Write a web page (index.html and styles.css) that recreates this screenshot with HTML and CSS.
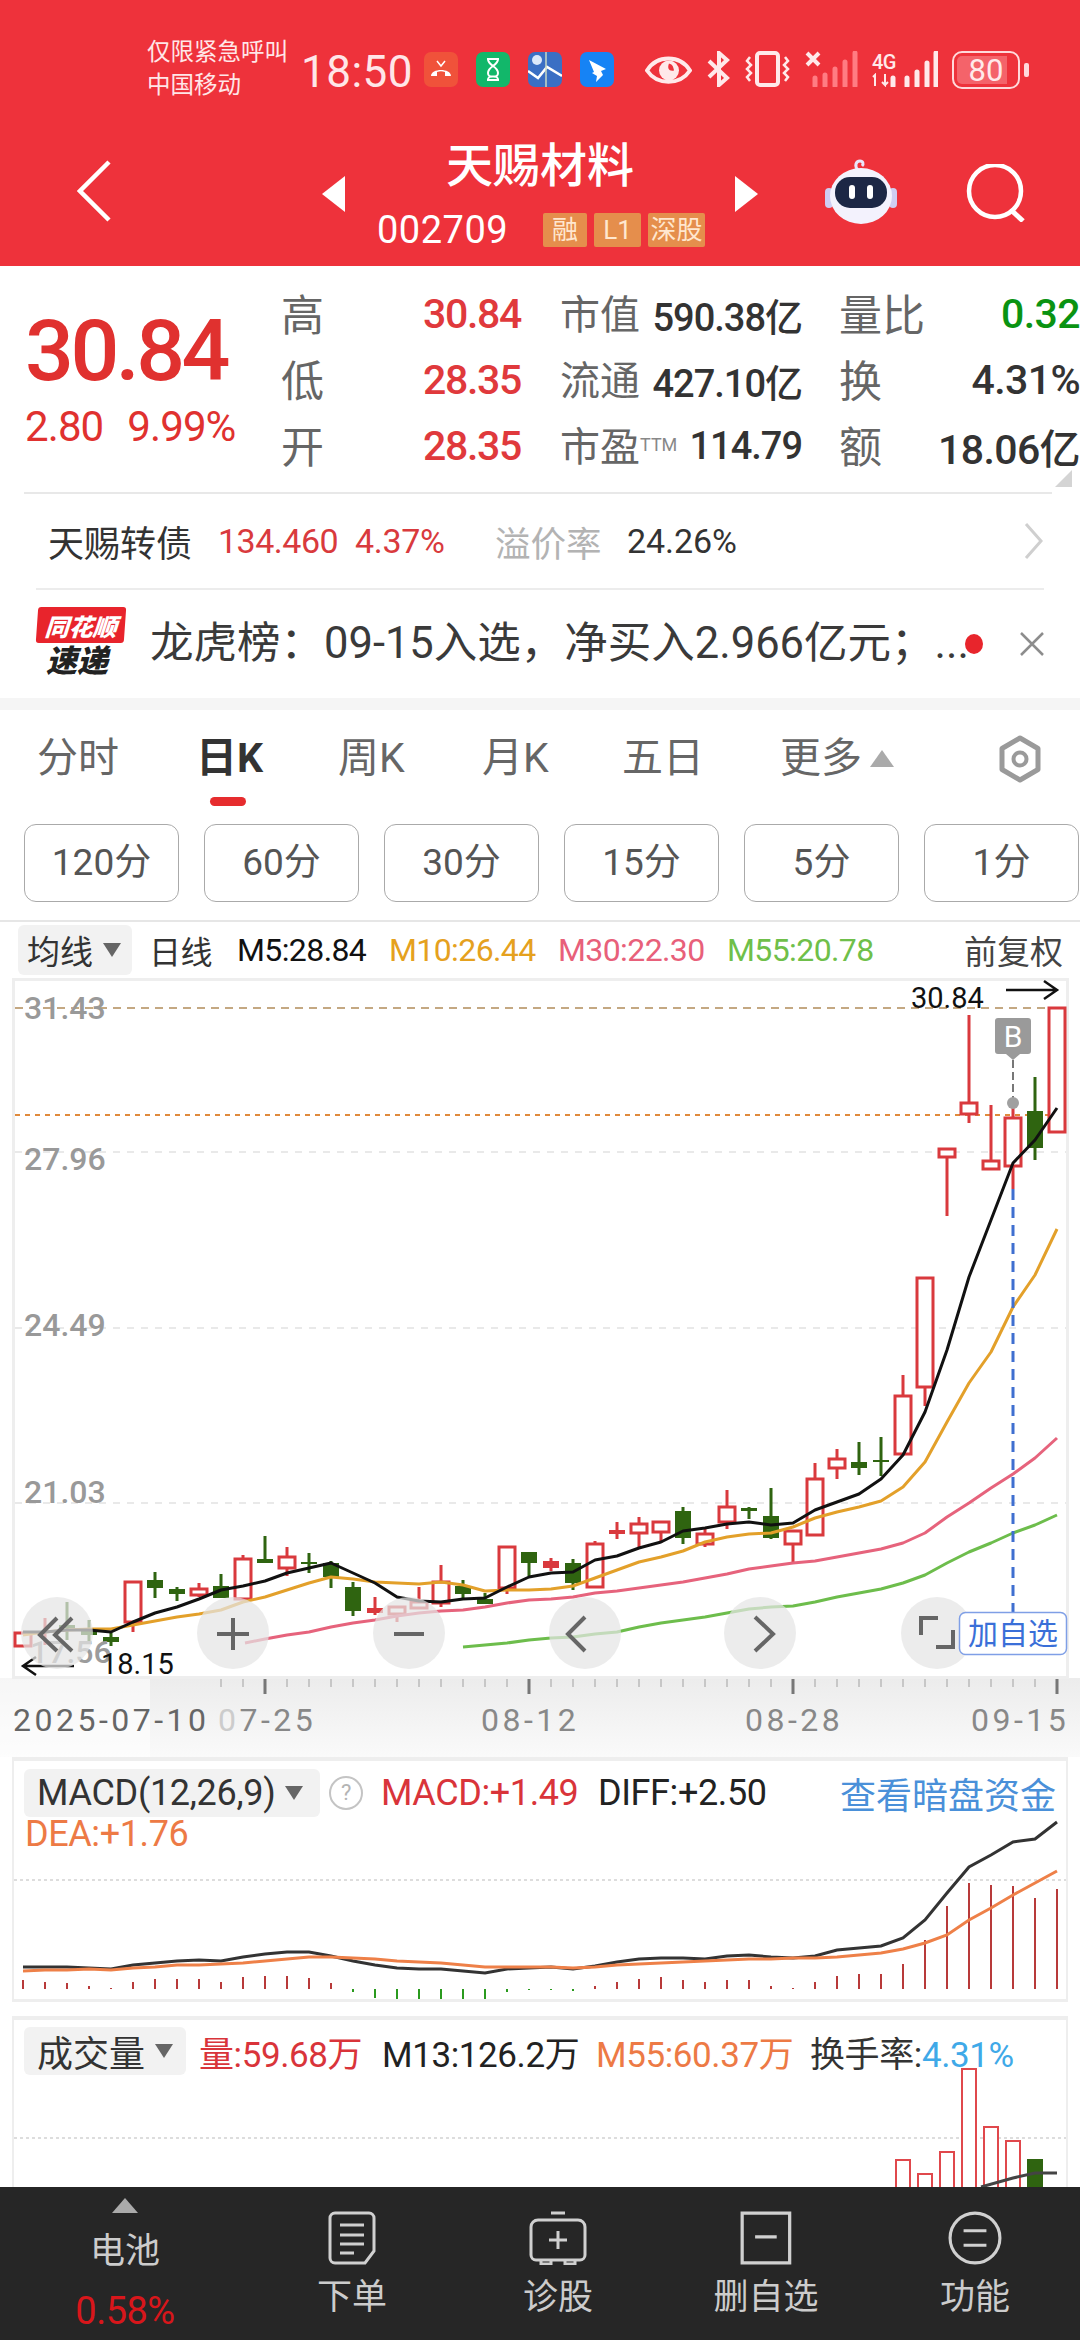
FILE: index.html
```html
<!DOCTYPE html>
<html lang="zh-CN">
<head>
  <meta charset="UTF-8">
  <meta name="viewport" content="width=device-width, initial-scale=1.0">
  <title>天赐材料</title>
  <link rel="stylesheet" href="styles.css">
</head>
<body>
<div class="page">

  <div class="header">
    <div class="statusbar">
      <div class="carrier"><div>仅限紧急呼叫</div><div>中国移动</div></div>
      <div class="clock">18:50</div>
      <div class="apps">
        <svg class="app" viewBox="0 0 34 35"><rect width="34" height="35" rx="7" fill="#f0523a"/><path d="M7 24c0-8 20-8 20 0h-6v-4c-3-1-5-1-8 0v4z" fill="#fff"/><path d="M13 9l4 5 4-5" fill="none" stroke="#fff" stroke-width="1.5"/></svg>
        <svg class="app" viewBox="0 0 34 35"><rect width="34" height="35" rx="7" fill="#12b76a"/><path d="M11 7h12M11 28h12M12 7c0 7 10 7 10 14s-10 0-10 7M22 7c0 7-10 7-10 14s10 0 10 7" fill="none" stroke="#fff" stroke-width="2"/></svg>
        <svg class="app" viewBox="0 0 34 35"><rect width="34" height="35" rx="7" fill="#3b6fc4"/><path d="M0 19l10 7 9-11 15 9" fill="none" stroke="#fff" stroke-width="2.5"/><path d="M18 0v35" stroke="#c9d8c4" stroke-width="1.5"/><circle cx="9" cy="8" r="5" fill="#dce8fa"/></svg>
        <svg class="app" viewBox="0 0 34 35"><rect width="34" height="35" rx="7" fill="#1683f5"/><path d="M9 8l17 9-5 2 2 4-7 7 1-6-5-3 2-1z" fill="#fff"/></svg>
      </div>
      <div class="indicators">
        <svg class="ind-eye" viewBox="0 0 47 33"><path d="M2 17C12 1 35 1 45 17 35 32 12 32 2 17z" fill="none" stroke="#ffe9ea" stroke-width="4"/><circle cx="24" cy="17" r="10" fill="#ffe9ea"/><path d="M24 10c-2 5 0 8 5 7-1-5-2-6-5-7z" fill="#ee323b"/></svg>
        <svg class="ind-bt" viewBox="0 0 23 36"><path d="M2 10l18 17-8 7V2l8 7L2 26" fill="none" stroke="#ffe9ea" stroke-width="4"/></svg>
        <svg class="ind-vib" viewBox="0 0 45 36"><rect x="12" y="2" width="21" height="32" rx="3" fill="none" stroke="#ffe9ea" stroke-width="4"/><path d="M5 6l-3 4 4 4-4 4 4 4-4 4 3 4M40 6l3 4-4 4 4 4-4 4 4 4-3 4" fill="none" stroke="#ffe9ea" stroke-width="2.5"/></svg>
        <svg class="ind-sig1" viewBox="0 0 53 36"><path d="M2 2l12 12M14 2L2 14" stroke="#ffe9ea" stroke-width="4"/><path d="M10 35v-8M20 35V24M30 35V18M40 35V11M50 35V2" stroke="#ff7c83" stroke-width="5" stroke-linecap="round"/></svg>
        <div class="ind-4g">
          <div class="g-label"><div>4G</div><svg class="g-arrows" viewBox="0 0 24 14"><path d="M3 13V2L1 4M13 1v11l-3-3M13 12l3-3" fill="none" stroke="#ffe9ea" stroke-width="2"/><path d="M21 5v8" stroke="#ffe9ea" stroke-width="5" stroke-linecap="round"/></svg></div>
          <svg class="g-bars" viewBox="0 0 36 36"><path d="M5 35v-8M15 35V21M25 35V12M34 35V2" stroke="#ffe9ea" stroke-width="5" stroke-linecap="round"/></svg>
        </div>
        <div class="battery"><div class="battery-body"><span class="battery-fill"></span><span class="battery-num">80</span></div><div class="battery-nub"></div></div>
      </div>
    </div>

    <div class="titlebar">
      <svg class="back" viewBox="0 0 34 62"><path d="M32 2L3 31l29 29" fill="none" stroke="#fff" stroke-width="4.5"/></svg>
      <svg class="arrow-l" viewBox="0 0 23 36"><path d="M23 0v36L0 18z" fill="#fff"/></svg>
      <div class="title-mid">
        <div class="stock-name">天赐材料</div>
        <div class="stock-sub">
          <span class="stock-code">002709</span>
          <span class="tag">融</span>
          <span class="tag tag-l1">L1</span>
          <span class="tag tag-cut">深股</span>
        </div>
      </div>
      <svg class="arrow-r" viewBox="0 0 23 36"><path d="M0 0v36l23-18z" fill="#fff"/></svg>
      <svg class="robot" viewBox="0 0 72 66"><path d="M33 12c-4-4-2-9 2-9 3 0 4 3 2 5" fill="none" stroke="#e9e6fb" stroke-width="3"/><rect x="0" y="30" width="8" height="20" rx="4" fill="#cfcdf2"/><rect x="64" y="30" width="8" height="20" rx="4" fill="#cfcdf2"/><ellipse cx="36" cy="38" rx="31" ry="28" fill="#f3f2fd"/><rect x="10" y="19" width="52" height="31" rx="15" fill="#1c2745"/><rect x="24" y="27" width="6" height="14" rx="3" fill="#fff"/><rect x="42" y="27" width="6" height="14" rx="3" fill="#fff"/></svg>
      <svg class="search" viewBox="0 0 60 58"><circle cx="29" cy="27" r="26" fill="none" stroke="#fff" stroke-width="4.5"/><path d="M45 46l12 11" stroke="#fff" stroke-width="5"/></svg>
    </div>
  </div>

  <div class="quote">
    <div class="price-box">
      <div class="price">30.84</div>
      <div class="change"><span>2.80</span><span>9.99%</span></div>
    </div>
    <div class="stats">
      <div class="cell cell-a"><span class="lb lb-big">高</span><span class="val red">30.84</span></div>
      <div class="cell cell-b"><span class="lb">市值</span><span class="val">590.38亿</span></div>
      <div class="cell cell-c"><span class="lb lb-big">量比</span><span class="val green">0.32</span></div>
      <div class="cell cell-a"><span class="lb lb-big">低</span><span class="val red">28.35</span></div>
      <div class="cell cell-b"><span class="lb">流通</span><span class="val">427.10亿</span></div>
      <div class="cell cell-c"><span class="lb lb-big">换</span><span class="val">4.31%</span></div>
      <div class="cell cell-a"><span class="lb lb-big">开</span><span class="val red">28.35</span></div>
      <div class="cell cell-b"><span class="lb">市盈<sup class="ttm">TTM</sup></span><span class="val">114.79</span></div>
      <div class="cell cell-c"><span class="lb lb-big">额</span><span class="val">18.06亿</span></div>
    </div>
  </div>
  <div class="quote-foot"><span class="corner"></span></div>

  <div class="bond">
    <span class="bond-name">天赐转债</span>
    <span class="bond-price">134.460</span>
    <span class="bond-pct">4.37%</span>
    <span class="bond-label">溢价率</span>
    <span class="bond-rate">24.26%</span>
    <svg class="bond-go" viewBox="0 0 20 38"><path d="M2 2l15 17L2 36" fill="none" stroke="#cfcfcf" stroke-width="3"/></svg>
  </div>

  <div class="news">
    <div class="logo">
      <div class="logo-top"><span>同花顺</span></div>
      <div class="logo-bot">速递</div>
    </div>
    <div class="news-text">龙虎榜：09-15入选，净买入2.966亿元；...</div>
    <span class="news-dot"></span>
    <svg class="news-x" viewBox="0 0 24 24"><path d="M1 1l22 22M23 1L1 23" stroke="#8d8d8d" stroke-width="2.5"/></svg>
  </div>

  <div class="band"></div>

  <div class="tabs">
    <span class="tab tab-1">分时</span>
    <span class="tab tab-2 active">日K</span>
    <span class="tab tab-3">周K</span>
    <span class="tab tab-4">月K</span>
    <span class="tab tab-5">五日</span>
    <span class="tab tab-6">更多<i class="tri-up"></i></span>
    <svg class="gear" viewBox="0 0 48 48"><path d="M24 3l18 10.500v21L24 45 6 34.500v-21z" fill="none" stroke="#9a9a9a" stroke-width="5" stroke-linejoin="round"/><circle cx="24" cy="24" r="6.500" fill="none" stroke="#9a9a9a" stroke-width="4"/></svg>
  </div>

  <div class="periods">
    <span class="period">120分</span>
    <span class="period">60分</span>
    <span class="period">30分</span>
    <span class="period">15分</span>
    <span class="period">5分</span>
    <span class="period">1分</span>
  </div>

  <div class="legend">
    <span class="chip chip-ma">均线<i class="tri-down"></i></span>
    <span class="lg-day">日线</span>
    <span class="lg-m5">M5:28.84</span>
    <span class="lg-m10">M10:26.44</span>
    <span class="lg-m30">M30:22.30</span>
    <span class="lg-m55">M55:20.78</span>
    <span class="lg-adj">前复权</span>
  </div>

  <svg class="kline" viewBox="0 978 1080 779">
    <defs>
      <linearGradient id="axisFade" x1="0" y1="0" x2="0" y2="1">
        <stop offset="0" stop-color="#ececec"/>
        <stop offset="1" stop-color="#fafafa"/>
      </linearGradient>
    </defs>
    <rect x="0" y="1678" width="1080" height="79" fill="url(#axisFade)"/>
    <rect x="0" y="1678" width="150" height="79" fill="#fff" opacity=".55"/>
    <path class="frame" d="M13.500 1678V979.500H1067.500V1678"/>
    <path class="frame" d="M12 1677.500H1069"/>

    <path class="grid" d="M15 1152H1066M15 1328H1066M15 1503H1066"/>
    <path class="grid-top" d="M15 1008H1066"/>
    <path class="grid-last" d="M15 1115H1066"/>

    <text class="axis" x="24" y="1019">31.43</text>
    <text class="axis" x="24" y="1170">27.96</text>
    <text class="axis" x="24" y="1336">24.49</text>
    <text class="axis" x="24" y="1503">21.03</text>

    <!-- wicks -->
    <path class="wick-up" d="M23 1633V1646M45 1618V1645M133 1582V1632M199 1583V1597M243 1555V1599M287 1547V1576M375 1597V1615M397 1607V1622M419 1587V1608M441 1565V1607M507 1547V1594M551 1558V1571M595 1541V1588M617 1522V1539M639 1517V1547M661 1522V1543M705 1527V1547M727 1490V1529M793 1531V1563M815 1463V1535M837 1449V1479M903 1375V1454M925 1387V1406M947 1157V1216M969 1015V1123M991 1105V1169M1013 1103V1189"/>
    <path class="wick-down" d="M67 1602V1640M89 1620V1643M111 1633V1646M155 1572V1598M177 1587V1601M221 1574V1598M265 1536V1563M309 1553V1573M331 1561V1588M353 1582V1616M463 1580V1600M485 1593V1604M529 1552V1576M573 1559V1590M683 1507V1544M749 1507V1519M771 1488V1539M859 1442V1475M881 1437V1476M1035 1077V1160"/>
    <!-- hollow up candles -->
    <path class="body-up" d="M15 1633h16v13h-16zM125 1582h16v40h-16zM191 1589h16v6h-16zM235 1559h16v40h-16zM279 1557h16v11h-16zM389 1607h16v7h-16zM411 1602h16v6h-16zM433 1582h16v21h-16zM499 1547h16v41h-16zM587 1544h16v43h-16zM631 1524h16v9h-16zM653 1522h16v10h-16zM697 1534h16v10h-16zM719 1507h16v15h-16zM785 1531h16v13h-16zM807 1479h16v56h-16zM829 1459h16v9h-16zM895 1396h16v58h-16zM917 1278h16v109h-16zM939 1149h16v8h-16zM961 1103h16v11h-16zM983 1161h16v8h-16zM1005 1118h16v48h-16zM1049 1008h16v124h-16z"/>
    <path class="body-flat" d="M367 1608h16v5h-16zM543 1561h16v7h-16zM609 1530h16v4h-16z"/>
    <!-- filled down candles -->
    <path class="body-down" d="M59 1625h16v3h-16zM81 1628h16v7h-16zM103 1637h16v5h-16zM147 1580h16v8h-16zM169 1589h16v5h-16zM213 1586h16v12h-16zM257 1559h16v4h-16zM301 1562h16v2h-16zM323 1563h16v14h-16zM345 1587h16v24h-16zM455 1586h16v8h-16zM477 1599h16v5h-16zM521 1552h16v11h-16zM565 1563h16v20h-16zM675 1511h16v27h-16zM741 1508h16v3h-16zM763 1516h16v22h-16zM851 1462h16v6h-16zM873 1460h16v2h-16zM1027 1111h16v37h-16z"/>

    <!-- moving averages -->
    <polyline class="ma ma55" points="463,1647 485,1645 507,1643 529,1640 551,1638 573,1637 595,1634 617,1632 639,1627 661,1623 683,1620 705,1617 727,1613 749,1609 771,1607 793,1606 815,1602 837,1597 859,1593 881,1589 903,1583 925,1575 947,1563 969,1552 991,1543 1013,1533 1035,1525 1057,1515"/>
    <polyline class="ma ma30" points="245,1643 265,1639 287,1635 309,1632 331,1627 353,1623 375,1620 397,1616 419,1613 441,1611 463,1610 485,1607 507,1603 529,1600 551,1599 573,1597 595,1593 617,1591 639,1588 661,1585 683,1582 705,1578 727,1574 749,1569 771,1566 793,1563 815,1561 837,1557 859,1553 881,1549 903,1543 925,1533 947,1517 969,1503 991,1488 1013,1474 1035,1458 1057,1438"/>
    <polyline class="ma ma10" points="23,1635 45,1632 67,1630 89,1629 111,1629 133,1625 155,1621 177,1617 199,1614 221,1610 243,1602 265,1597 287,1590 309,1583 331,1577 353,1579 375,1582 397,1583 419,1584 441,1582 463,1585 485,1591 507,1590 529,1590 551,1589 573,1586 595,1578 617,1570 639,1562 661,1557 683,1551 705,1542 727,1537 749,1534 771,1533 793,1527 815,1518 837,1512 859,1507 881,1501 903,1487 925,1462 947,1422 969,1383 991,1352 1013,1307 1035,1275 1057,1229"/>
    <polyline class="ma ma5" points="23,1632 45,1632 67,1630 89,1630 111,1632 133,1622 155,1613 177,1607 199,1599 221,1590 243,1586 265,1581 287,1573 309,1568 331,1563 353,1573 375,1583 397,1597 419,1601 441,1602 463,1599 485,1598 507,1587 529,1577 551,1573 573,1572 595,1560 617,1556 639,1548 661,1542 683,1531 705,1528 727,1524 749,1522 771,1525 793,1523 815,1510 837,1502 859,1494 881,1479 903,1455 925,1412 947,1350 969,1277 991,1220 1013,1163 1035,1140 1057,1108"/>

    <!-- B marker and crosshair -->
    <path class="cross" d="M1013 1189V1612"/>
    <path class="b-dash" d="M1013 1060V1100"/>
    <circle cx="1013" cy="1103" r="6" fill="#a0a0a0"/>
    <path d="M998 1018h30a3 3 0 0 1 3 3v30a3 3 0 0 1-3 3h-8l-7 6-7-6h-8a3 3 0 0 1-3-3v-30a3 3 0 0 1 3-3z" fill="#9a9a9a"/>
    <text class="b-text" x="1013" y="1047">B</text>

    <!-- high and low -->
    <text class="mark" x="911" y="1008">30.84</text>
    <path class="mark-line" d="M1006 990h50M1044 981l13 9-13 9"/>
    <text class="axis axis-faint" x="30" y="1663">17.56</text>
    <text class="mark" x="101" y="1674">18.15</text>
    <path class="mark-line" d="M74 1666H24M36 1657l-13 9 13 9"/>

    <!-- zoom and move buttons -->
    <g class="ctrl">
      <circle cx="57" cy="1633" r="36"/>
      <circle cx="233" cy="1633" r="36"/>
      <circle cx="409" cy="1633" r="36"/>
      <circle cx="585" cy="1633" r="36"/>
      <circle cx="760" cy="1633" r="36"/>
      <circle cx="937" cy="1633" r="36"/>
    </g>
    <path class="ctrl-icon" d="M57 1618l-17 17 17 16M72 1618l-17 17 17 16M233 1618v32M217 1634h32M394 1634h30M585 1617l-17 17 17 17M755 1617l18 17-18 17M921 1635v-17h17M953 1630v17h-17"/>

    <rect class="add-box" x="959.500" y="1612.500" width="107" height="42" rx="6"/>
    <text class="add-text" x="1013" y="1644">加自选</text>

    <!-- ticks and dates -->
    <path class="tick" d="M221 1679v8M243 1679v8M287 1679v8M309 1679v8M331 1679v8M353 1679v8M375 1679v8M397 1679v8M419 1679v8M441 1679v8M463 1679v8M485 1679v8M507 1679v8M551 1679v8M573 1679v8M595 1679v8M617 1679v8M639 1679v8M661 1679v8M683 1679v8M705 1679v8M727 1679v8M749 1679v8M771 1679v8M815 1679v8M837 1679v8M859 1679v8M881 1679v8M903 1679v8M925 1679v8M947 1679v8M969 1679v8M991 1679v8M1013 1679v8M1035 1679v8"/>
    <path class="tick-major" d="M265 1679v15M529 1679v15M793 1679v15M1057 1679v15"/>
    <text class="date date-first" x="13" y="1731">2025-07-10</text>
    <text class="date" x="218" y="1731"><tspan class="date-fade">0</tspan>7-25</text>
    <text class="date" x="481" y="1731">08-12</text>
    <text class="date" x="745" y="1731">08-28</text>
    <text class="date" x="971" y="1731">09-15</text>
  </svg>

  <div class="panel macd">
    <div class="macd-head">
      <span class="chip chip-macd">MACD(12,26,9)<i class="tri-down"></i></span>
      <span class="help">?</span>
      <span class="mh-macd">MACD:+1.49</span>
      <span class="mh-diff">DIFF:+2.50</span>
      <span class="mh-link">查看暗盘资金</span>
    </div>
    <div class="mh-dea">DEA:+1.76</div>
    <svg class="macd-chart" viewBox="14 1817 1052 182">
      <path class="dots" d="M14 1880H1066"/>
      <path class="bar-up" d="M23 1989v-9M45 1989v-7M67 1989v-6M89 1989v-3M111 1989v-1M133 1989v-7M155 1989v-10M177 1989v-10M199 1989v-10M221 1989v-7M243 1989v-12M265 1989v-13M287 1989v-13M309 1989v-11M331 1989v-6M595 1989v-3M617 1989v-7M639 1989v-10M661 1989v-12M683 1989v-9M705 1989v-7M727 1989v-9M749 1989v-9M771 1989v-3M793 1989v-1M815 1989v-7M837 1989v-13M859 1989v-15M881 1989v-15M903 1989v-25M925 1989v-49M947 1989v-83M969 1989v-106M991 1989v-104M1013 1989v-103M1035 1989v-91M1057 1989v-100"/>
      <path class="bar-down" d="M353 1989v3M375 1989v9M397 1989v10M419 1989v10M441 1989v10M463 1989v10M485 1989v10M507 1989v3M529 1989v1M551 1989v1M573 1989v2"/>
      <polyline class="diff" points="23,1967 45,1967 67,1967 89,1968 111,1969 133,1965 155,1963 177,1961 199,1960 221,1961 243,1957 265,1954 287,1952 309,1952 331,1956 353,1961 375,1965 397,1968 419,1969 441,1969 463,1971 485,1973 507,1969 529,1968 551,1967 573,1969 595,1966 617,1962 639,1959 661,1958 683,1958 705,1959 727,1956 749,1955 771,1957 793,1958 815,1956 837,1950 859,1948 881,1946 903,1938 925,1920 947,1893 969,1867 991,1855 1013,1842 1035,1839 1057,1822"/>
      <polyline class="dea" points="23,1971 45,1970 67,1970 89,1969 111,1970 133,1968 155,1967 177,1965 199,1965 221,1964 243,1963 265,1961 287,1959 309,1957 331,1957 353,1958 375,1959 397,1961 419,1962 441,1963 463,1965 485,1967 507,1967 529,1967 551,1967 573,1968 595,1967 617,1965 639,1964 661,1963 683,1962 705,1961 727,1960 749,1959 771,1959 793,1958 815,1958 837,1957 859,1955 881,1953 903,1949 925,1943 947,1935 969,1920 991,1908 1013,1895 1035,1883 1057,1871"/>
    </svg>
  </div>

  <div class="panel vol">
    <div class="vol-head">
      <span class="chip chip-vol">成交量<i class="tri-down"></i></span>
      <span class="vh-vol">量:59.68万</span>
      <span class="vh-m13">M13:126.2万</span>
      <span class="vh-m55">M55:60.37万</span>
      <span class="vh-rate">换手率:<em>4.31%</em></span>
    </div>
    <svg class="vol-chart" viewBox="14 2067 1052 120">
      <path class="dots" d="M14 2138H1066"/>
      <path class="vol-up" d="M896 2160h14v30h-14zM918 2174h14v16h-14zM940 2152h14v38h-14zM962 2069h14v121h-14zM984 2127h14v63h-14zM1006 2141h14v49h-14z"/>
      <rect class="vol-down" x="1027" y="2159" width="16" height="30"/>
      <polyline class="vol-ma" points="981,2187 1013,2178 1035,2173 1057,2173"/>
    </svg>
  </div>

  <div class="nav">
    <div class="nav-item nav-battery">
      <i class="nav-tri"></i>
      <span class="nav-name">电池</span>
      <span class="nav-pct">0.58%</span>
    </div>
    <div class="nav-item">
      <svg class="nav-icon" viewBox="0 0 48 54"><path d="M7 2h34a5 5 0 0 1 5 5v33l-9 12H7a5 5 0 0 1-5-5V7a5 5 0 0 1 5-5zM12 14h24M12 24h24M12 33h24M12 42h14" fill="none" stroke="#d0d0d0" stroke-width="3"/></svg>
      <span class="nav-name">下单</span>
    </div>
    <div class="nav-item">
      <svg class="nav-icon" viewBox="0 0 58 54"><path d="M22 2h14M9 9h40a7 7 0 0 1 7 7v28a5 5 0 0 1-5 5H7a5 5 0 0 1-5-5V16a7 7 0 0 1 7-7zM29 20v18M20 29h18M12 49v4h10v-4M36 49v4h10v-4" fill="none" stroke="#d0d0d0" stroke-width="3"/></svg>
      <span class="nav-name">诊股</span>
    </div>
    <div class="nav-item">
      <svg class="nav-icon" viewBox="0 0 48 50"><path d="M2 2h44v46H2zM14 24h20" fill="none" stroke="#d0d0d0" stroke-width="3"/></svg>
      <span class="nav-name">删自选</span>
    </div>
    <div class="nav-item">
      <svg class="nav-icon" viewBox="0 0 52 52"><ellipse cx="26" cy="26" rx="24" ry="24" fill="none" stroke="#d0d0d0" stroke-width="3"/><path d="M15 19h22M15 33h22" stroke="#d0d0d0" stroke-width="3"/></svg>
      <span class="nav-name">功能</span>
    </div>
  </div>

</div>
</body>
</html>
```

FILE: styles.css
```css
* {
  box-sizing: border-box;
}
body {
  margin: 0;
  padding: 0;
  background: #fff;
  font-family: Roboto, "Noto Sans CJK SC", sans-serif;
}
i {
  font-style: normal;
}
svg {
  display: block;
  flex: none;
}
.page {
  position: relative;
  width: 1080px;
  height: 2340px;
  overflow: hidden;
}

/* header */
.header {
  height: 266px;
  background: #ee323b;
  padding: 36px 0 0 147px;
}
.statusbar {
  display: flex;
  height: 66px;
  color: #ffe6e8;
}
.carrier {
  width: 154px;
  font-size: 23.500px;
  line-height: 33px;
  white-space: nowrap;
}
.clock {
  width: 123px;
  padding-top: 10px;
  font-size: 44px;
  line-height: 52px;
  letter-spacing: .5px;
}
.apps {
  display: flex;
  gap: 18px;
  padding-top: 16px;
}
.app {
  width: 34px;
  height: 35px;
}
.indicators {
  display: flex;
  align-items: flex-start;
  margin-left: 31px;
  padding-top: 15px;
}
.ind-eye {
  width: 47px;
  height: 34px;
  margin-top: 2px;
}
.ind-bt {
  width: 23px;
  height: 36px;
  margin-left: 15px;
}
.ind-vib {
  width: 45px;
  height: 36px;
  margin-left: 15px;
}
.ind-sig1 {
  width: 53px;
  height: 36px;
  margin-left: 15px;
}
.ind-4g {
  display: flex;
  width: 66px;
  height: 36px;
  margin-left: 14px;
}
.g-label {
  width: 30px;
  font-size: 20px;
  font-weight: 500;
  line-height: 22px;
  letter-spacing: -.5px;
  color: #ffe9ea;
}
.g-arrows {
  width: 24px;
  height: 14px;
}
.g-bars {
  width: 36px;
  height: 36px;
}
.battery {
  display: flex;
  align-items: center;
  margin-left: 14px;
  height: 38px;
}
.battery-body {
  position: relative;
  display: flex;
  align-items: center;
  justify-content: center;
  width: 68px;
  height: 38px;
  border: 2.500px solid #ffd9db;
  border-radius: 10px;
  font-size: 31px;
  color: #ffe9ea;
}
.battery-fill {
  position: absolute;
  left: 3px;
  top: 3px;
  bottom: 3px;
  width: 50px;
  background: #f4636a;
  border-radius: 5px 0 0 5px;
}
.battery-num {
  position: relative;
}
.battery-nub {
  width: 5px;
  height: 14px;
  margin-left: 4px;
  background: #ffd9db;
  border-radius: 2px;
}
.titlebar {
  display: flex;
  align-items: center;
  height: 164px;
  padding-left: 77px;
  margin-left: -147px;
}
.back {
  width: 34px;
  height: 62px;
  margin-top: 14px;
}
.arrow-l {
  width: 23px;
  height: 36px;
  margin-left: 211px;
  margin-top: 20px;
}
.title-mid {
  width: 390px;
  margin-top: 15px;
}
.stock-name {
  padding-left: 101px;
  font-size: 47px;
  line-height: 60px;
  font-weight: 500;
  color: #fff;
}
.stock-sub {
  display: flex;
  align-items: center;
  margin-top: 17px;
  padding-left: 32px;
}
.stock-code {
  width: 166px;
  font-size: 38px;
  line-height: 34px;
  color: #fff;
  letter-spacing: .5px;
}
.tag {
  width: 44px;
  height: 34px;
  margin-right: 7px;
  background: #e58e4c;
  border-radius: 2px;
  color: #ffe7cf;
  font-size: 26px;
  line-height: 34px;
  text-align: center;
  overflow: hidden;
  white-space: nowrap;
}
.tag-l1 {
  width: 47px;
}
.tag-cut {
  width: 57px;
  margin-right: 0;
}
.arrow-r {
  width: 23px;
  height: 36px;
  margin-top: 20px;
}
.robot {
  width: 72px;
  height: 66px;
  margin-left: 67px;
  margin-top: 14px;
}
.search {
  width: 60px;
  height: 58px;
  margin-left: 69px;
  margin-top: 18px;
}

/* quote */
.quote {
  display: flex;
  height: 203px;
  padding-top: 13px;
  color: #333;
}
.price-box {
  width: 281px;
  padding: 29px 0 0 25px;
  color: #e0312f;
}
.price {
  font-size: 86px;
  line-height: 86px;
  font-weight: 500;
  letter-spacing: -3.500px;
}
.change {
  display: flex;
  gap: 24px;
  margin-top: 10px;
  font-size: 42px;
  line-height: 46px;
  letter-spacing: -.9px;
}
.stats {
  display: grid;
  grid-template-columns: 240px 240px 240px;
  grid-auto-rows: 66px;
  column-gap: 39px;
  width: 799px;
}
.cell {
  display: flex;
  align-items: center;
  justify-content: space-between;
  white-space: nowrap;
}
.lb {
  font-size: 40px;
  color: #666;
}
.lb-big {
  font-size: 43px;
}
.ttm {
  font-size: 18px;
  vertical-align: 10px;
  line-height: 0;
  color: #888;
}
.val {
  padding-top: 4px;
  font-size: 41px;
  letter-spacing: -1.300px;
  font-weight: 500;
  color: #333;
}
.cell-b {
  margin-right: -2px;
}
.cell-b .val {
  font-size: 38px;
  letter-spacing: -1px;
}
.cell-c {
  margin-right: -1px;
}
.cell-c .val {
  letter-spacing: -.6px;
}
.red {
  color: #e0393c;
}
.cell-c .green {
  color: #0a9312;
}
.quote-foot {
  position: relative;
  height: 25px;
  margin: 0 28px 0 24px;
  border-bottom: 2px solid #e8e8e8;
}
.corner {
  position: absolute;
  right: -20px;
  top: 1px;
  border-left: 17px solid transparent;
  border-bottom: 17px solid #d4d4d4;
}

/* bond row */
.bond {
  display: flex;
  align-items: center;
  height: 96px;
  margin: 0 36px;
  padding-left: 12px;
  border-bottom: 2px solid #ececec;
  font-size: 34px;
  white-space: nowrap;
}
.bond-name {
  width: 170px;
  font-size: 36px;
  color: #333;
}
.bond-price {
  width: 137px;
  color: #d93a3d;
  letter-spacing: -.5px;
}
.bond-pct {
  width: 140px;
  color: #d93a3d;
  letter-spacing: -.3px;
}
.bond-label {
  width: 132px;
  font-size: 35.500px;
  color: #b3b3b3;
}
.bond-rate {
  color: #333;
  letter-spacing: -.1px;
}
.bond-go {
  width: 20px;
  height: 38px;
  margin-left: auto;
}

/* news row */
.news {
  display: flex;
  align-items: center;
  height: 108px;
  padding-left: 37px;
}
.logo {
  width: 113px;
  height: 74px;
}
.logo-top {
  display: flex;
  align-items: center;
  justify-content: center;
  width: 88px;
  height: 36px;
  background: #e8242c;
  border-radius: 3px;
  transform: skewX(-4deg);
  color: #fff;
  font-size: 24px;
  font-weight: 900;
  font-style: italic;
}
.logo-bot {
  padding-left: 9px;
  font-size: 31px;
  line-height: 38px;
  font-weight: 900;
  font-style: italic;
  color: #222;
}
.news-text {
  width: 815px;
  font-size: 43.500px;
  line-height: 60px;
  color: #3a3a3a;
  white-space: nowrap;
}
.news-dot {
  width: 18px;
  height: 20px;
  background: #e8252c;
  border-radius: 50%;
}
.news-x {
  width: 24px;
  height: 24px;
  margin-left: 37px;
}
.band {
  height: 12px;
  background: #f5f5f5;
}

/* tabs */
.tabs {
  position: relative;
  display: flex;
  align-items: flex-start;
  height: 114px;
  padding: 23px 0 0 37px;
  color: #666;
}
.tab {
  flex: none;
  font-size: 41px;
  line-height: 50px;
  white-space: nowrap;
}
.tab-1 {
  width: 159px;
}
.tab-2 {
  width: 142px;
  color: #333;
  font-weight: 700;
}
.tab-3 {
  width: 144px;
}
.tab-4 {
  width: 140px;
}
.tab-5 {
  width: 158px;
}
.tab-6 {
  display: flex;
  align-items: center;
  width: 216px;
}
.active::after {
  content: "";
  position: absolute;
  left: 210px;
  top: 87px;
  width: 36px;
  height: 9px;
  background: #e62c2e;
  border-radius: 5px;
}
.tri-up {
  width: 0;
  height: 0;
  margin-left: 8px;
  border-left: 12px solid transparent;
  border-right: 12px solid transparent;
  border-bottom: 17px solid #aaa;
}
.gear {
  width: 48px;
  height: 48px;
  margin-top: 2px;
}
.periods {
  display: flex;
  gap: 25px;
  height: 96px;
  padding-left: 24px;
}
.period {
  flex: none;
  width: 155px;
  height: 78px;
  border: 1px solid #aaa;
  border-radius: 12px;
  color: #555;
  font-size: 37px;
  line-height: 75px;
  text-align: center;
}
.legend {
  display: flex;
  align-items: center;
  height: 58px;
  border-top: 2px solid #e6e6e6;
  padding-left: 18px;
  font-size: 32px;
  white-space: nowrap;
  letter-spacing: -.6px;
}
.chip {
  display: flex;
  align-items: center;
  background: #f2f2f2;
  border-radius: 6px;
  color: #333;
  font-size: 33px;
  letter-spacing: 0;
}
.chip-ma {
  width: 114px;
  height: 50px;
  padding-left: 9px;
}
.tri-down {
  width: 0;
  height: 0;
  margin-left: 10px;
  border-left: 9px solid transparent;
  border-right: 9px solid transparent;
  border-top: 14px solid #666;
}
.lg-day {
  width: 88px;
  margin-left: 17px;
  color: #333;
}
.lg-m5 {
  width: 152px;
  color: #111;
}
.lg-m10 {
  width: 169px;
  color: #e5a11e;
}
.lg-m30 {
  width: 169px;
  color: #e8607a;
}
.lg-m55 {
  width: 237px;
  color: #6fbf4a;
}
.lg-adj {
  font-size: 33px;
  letter-spacing: 0;
  color: #444;
}

/* k line */
.kline {
  width: 1080px;
  height: 779px;
}
.frame {
  fill: none;
  stroke: #eee;
  stroke-width: 3;
}
.grid {
  fill: none;
  stroke: #e2e2e2;
  stroke-width: 1.500;
  stroke-dasharray: 7 7;
}
.grid-top {
  fill: none;
  stroke: #c4a882;
  stroke-width: 2;
  stroke-dasharray: 8 6;
}
.grid-last {
  fill: none;
  stroke: #e08a3c;
  stroke-width: 2;
  stroke-dasharray: 5 5;
}
.axis {
  font-size: 32px;
  font-weight: 500;
  fill: #999;
}
.axis-faint {
  fill: #9c9c9c;
}
.wick-up {
  fill: none;
  stroke: #d9393d;
  stroke-width: 3;
}
.wick-down {
  fill: none;
  stroke: #2f6410;
  stroke-width: 3;
}
.body-up {
  fill: #fff;
  stroke: #d9393d;
  stroke-width: 3;
}
.body-flat {
  fill: #d9393d;
}
.body-down {
  fill: #2f6410;
}
.ma {
  fill: none;
  stroke-width: 3;
  stroke-linejoin: round;
}
.ma5 {
  stroke: #111;
}
.ma10 {
  stroke: #e3a02a;
}
.ma30 {
  stroke: #e6637c;
}
.ma55 {
  stroke: #6dbd4c;
}
.cross {
  fill: none;
  stroke: #3f6fd0;
  stroke-width: 3;
  stroke-dasharray: 11 7;
}
.b-dash {
  fill: none;
  stroke: #777;
  stroke-width: 2;
  stroke-dasharray: 8 4;
}
.b-text {
  font-size: 30px;
  fill: #fff;
  text-anchor: middle;
}
.mark {
  font-size: 29px;
  fill: #111;
}
.mark-line {
  fill: none;
  stroke: #111;
  stroke-width: 2.500;
}
.ctrl circle {
  fill: #e4e4e4;
  fill-opacity: .72;
}
.ctrl-icon {
  fill: none;
  stroke: #666;
  stroke-width: 4;
}
.add-box {
  fill: #fff;
  stroke: #7f9fe6;
  stroke-width: 1.500;
}
.add-text {
  font-size: 30px;
  fill: #3a6fd8;
  text-anchor: middle;
}
.tick {
  fill: none;
  stroke: #bbb;
  stroke-width: 1.500;
}
.tick-major {
  fill: none;
  stroke: #777;
  stroke-width: 3;
}
.date {
  font-size: 32px;
  fill: #888;
  letter-spacing: 3.500px;
}
.date-first {
  fill: #666;
}
.date-fade {
  fill: #ccc;
}

/* lower panels */
.panel {
  margin: 0 12px;
  border-left: 2px solid #eee;
  border-right: 2px solid #eee;
}
.macd {
  height: 245px;
  padding-top: 8px;
  border-top: 4px solid #eee;
  border-bottom: 3px solid #eee;
  font-size: 36px;
  letter-spacing: -.4px;
  white-space: nowrap;
}
.macd-head {
  display: flex;
  align-items: center;
  height: 48px;
  margin-left: 10px;
}
.chip-macd {
  flex: none;
  width: 296px;
  height: 48px;
  padding-left: 13px;
  font-size: 36px;
  letter-spacing: -.3px;
}
.help {
  flex: none;
  width: 34px;
  height: 34px;
  margin-left: 9px;
  border: 2px solid #c4c4c4;
  border-radius: 50%;
  color: #b4b4b4;
  font-size: 22px;
  line-height: 30px;
  text-align: center;
}
.mh-macd {
  flex: none;
  width: 217px;
  margin-left: 18px;
  color: #d9343a;
}
.mh-diff {
  flex: none;
  width: 242px;
  color: #222;
}
.mh-link {
  font-size: 36px;
  color: #4a90d9;
  letter-spacing: 0;
}
.mh-dea {
  height: 34px;
  margin-left: 11px;
  line-height: 34px;
  color: #ed7a45;
}
.macd-chart {
  width: 1052px;
  height: 182px;
  margin-top: -34px;
}
.dots {
  fill: none;
  stroke: #ddd;
  stroke-width: 2;
  stroke-dasharray: 3 3;
}
.bar-up {
  fill: none;
  stroke: #b83a3a;
  stroke-width: 2;
}
.bar-down {
  fill: none;
  stroke: #2a9a1e;
  stroke-width: 2;
}
.diff {
  fill: none;
  stroke: #333;
  stroke-width: 3;
}
.dea {
  fill: none;
  stroke: #ee8048;
  stroke-width: 3;
}
.vol {
  height: 171px;
  margin-top: 14px;
  padding-top: 7px;
  border-top: 4px solid #eee;
  font-size: 35px;
  letter-spacing: -.4px;
  white-space: nowrap;
}
.vol-head {
  display: flex;
  align-items: center;
  height: 48px;
  margin-left: 10px;
}
.chip-vol {
  flex: none;
  width: 162px;
  height: 48px;
  padding-left: 13px;
  font-size: 36px;
}
.vh-vol {
  flex: none;
  width: 183px;
  margin-left: 13px;
  color: #d9343a;
}
.vh-m13 {
  flex: none;
  width: 214px;
  color: #222;
}
.vh-m55 {
  flex: none;
  width: 214px;
  color: #ed7a45;
}
.vh-rate {
  color: #333;
}
.vh-rate em {
  font-style: normal;
  color: #3fa9e8;
}
.vol-chart {
  width: 1052px;
  height: 120px;
  margin-top: -8px;
}
.vol-up {
  fill: #fff;
  stroke: #e0484c;
  stroke-width: 2;
}
.vol-down {
  fill: #2f6410;
}
.vol-ma {
  fill: none;
  stroke: #444;
  stroke-width: 3;
}

/* bottom nav */
.nav {
  display: grid;
  grid-template-columns: 250px 204px 208px 208px 210px;
  height: 153px;
  background: #262626;
  color: #ccc;
}
.nav-item {
  display: flex;
  flex-direction: column;
  align-items: center;
  padding-top: 24px;
}
.nav-icon {
  height: 54px;
}
.nav-name {
  margin-top: 8px;
  font-size: 35px;
  line-height: 50px;
}
.nav-battery {
  padding-top: 11px;
}
.nav-tri {
  width: 0;
  height: 0;
  border-left: 13px solid transparent;
  border-right: 13px solid transparent;
  border-bottom: 15px solid #aaa;
}
.nav-battery .nav-name {
  margin-top: 14px;
}
.nav-pct {
  margin-top: 14px;
  font-size: 38px;
  line-height: 40px;
  letter-spacing: -.5px;
  color: #d8161b;
}
```
